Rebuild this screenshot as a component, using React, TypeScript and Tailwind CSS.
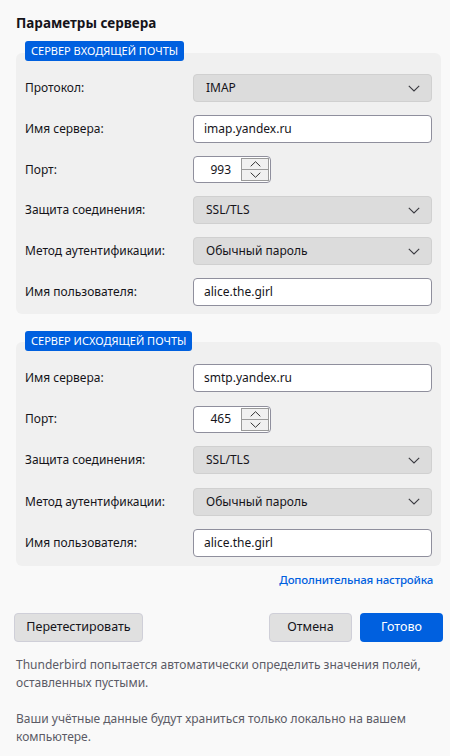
import React from "react";

const font = { fontFamily: '"Noto Sans", "Open Sans", sans-serif' };

function Chevron() {
  return (
    <svg width="12" height="7" viewBox="0 0 12 7" fill="none" className="shrink-0">
      <path d="M0.8 0.8 L6 6 L11.2 0.8" stroke="#3a3a40" strokeWidth="1.1" />
    </svg>
  );
}

function Select({ value }: { value: string }) {
  return (
    <div className="h-[28px] flex items-center justify-between rounded-[4px] bg-[#dcdcdc] border border-[#d0d0d0] pl-[12px] pr-[11px] text-[12px] text-[#15141a]">
      <span>{value}</span>
      <Chevron />
    </div>
  );
}

function Input({ value }: { value: string }) {
  return (
    <div className="h-[28px] flex items-center rounded-[4px] bg-white border border-[#8f8f9d] pl-[10px] text-[12px] text-[#15141a]">
      {value}
    </div>
  );
}

function Port({ value }: { value: string }) {
  return (
    <div className="h-[27px] w-[78px] flex items-stretch rounded-[4px] bg-white border border-[#8f8f9d] text-[12px] text-[#15141a]">
      <div className="flex-1 flex items-center justify-end pr-[9px]">{value}</div>
      <div className="w-[28px] m-[1px] flex flex-col border border-[#9a9a9a] bg-[#f0f0f0]">
        <div className="flex-1 flex items-center justify-center border-b border-[#9a9a9a]">
          <svg width="11" height="6" viewBox="0 0 11 6" fill="none">
            <path d="M0.7 5.3 L5.5 0.7 L10.3 5.3" stroke="#333" strokeWidth="1" />
          </svg>
        </div>
        <div className="flex-1 flex items-center justify-center">
          <svg width="11" height="6" viewBox="0 0 11 6" fill="none">
            <path d="M0.7 0.7 L5.5 5.3 L10.3 0.7" stroke="#333" strokeWidth="1" />
          </svg>
        </div>
      </div>
    </div>
  );
}

function Label({ children }: { children: React.ReactNode }) {
  return <div className="text-[12px] text-[#15141a]">{children}</div>;
}

function Badge({ children }: { children: React.ReactNode }) {
  return (
    <div className="relative z-10 ml-[9px] self-start h-[20px] flex items-center rounded-[3px] bg-[#0060df] px-[6px] text-[11px] text-white">
      {children}
    </div>
  );
}

export default function App() {
  return (
    <div style={font} className="w-[450px] h-[756px] bg-[#f9f9f9] pl-4 pr-[9px] pt-[13px] overflow-hidden">
      <div className="text-[13.5px] font-bold text-[#15141a] leading-[20px]">Параметры сервера</div>

      <div className="mt-[8px] flex flex-col">
        <Badge>СЕРВЕР ВХОДЯЩЕЙ ПОЧТЫ</Badge>
        <div className="-mt-[8px] rounded-[6px] bg-[#f0f0f0] pt-[21px] pb-[8px] pl-[9px] pr-[9px] grid grid-cols-[168px_1fr] items-center gap-y-[13px]">
          <Label>Протокол:</Label>
          <Select value="IMAP" />
          <Label>Имя сервера:</Label>
          <Input value="imap.yandex.ru" />
          <Label>Порт:</Label>
          <Port value="993" />
          <Label>Защита соединения:</Label>
          <Select value="SSL/TLS" />
          <Label>Метод аутентификации:</Label>
          <Select value="Обычный пароль" />
          <Label>Имя пользователя:</Label>
          <Input value="alice.the.girl" />
        </div>
      </div>

      <div className="mt-[17px] flex flex-col">
        <Badge>СЕРВЕР ИСХОДЯЩЕЙ ПОЧТЫ</Badge>
        <div className="-mt-[9px] rounded-[6px] bg-[#f0f0f0] pt-[22px] pb-[9px] pl-[9px] pr-[9px] grid grid-cols-[168px_1fr] items-center gap-y-[13.5px]">
          <Label>Имя сервера:</Label>
          <Input value="smtp.yandex.ru" />
          <Label>Порт:</Label>
          <Port value="465" />
          <Label>Защита соединения:</Label>
          <Select value="SSL/TLS" />
          <Label>Метод аутентификации:</Label>
          <Select value="Обычный пароль" />
          <Label>Имя пользователя:</Label>
          <Input value="alice.the.girl" />
        </div>
      </div>

      <div className="mt-[5px] flex justify-end pr-[8px]">
        <span className="text-[11.5px] font-medium tracking-[-0.2px] text-[#0060df] leading-[18px]">Дополнительная настройка</span>
      </div>

      <div className="mt-[24px] -ml-[2px] -mr-[2px] flex items-center">
        <div className="h-[29px] w-[129px] flex items-center justify-center rounded-[4px] bg-[#e0e0e0] border border-[#cfcfd8] text-[12.5px] text-[#15141a]">
          Перетестировать
        </div>
        <div className="flex-1" />
        <div className="h-[29px] w-[83px] flex items-center justify-center rounded-[4px] bg-[#e0e0e0] border border-[#cfcfd8] text-[12.5px] text-[#15141a]">
          Отмена
        </div>
        <div className="ml-[8px] h-[29px] w-[83px] flex items-center justify-center rounded-[4px] bg-[#0060df] text-[12.5px] text-white">
          Готово
        </div>
      </div>

      <div className="mt-[14px] text-[12px] leading-[18px] text-[#5b5b66]">
        Thunderbird попытается автоматически определить значения полей, оставленных пустыми.
      </div>
      <div className="mt-[18px] text-[12px] leading-[18px] text-[#5b5b66]">
        Ваши учётные данные будут храниться только локально на вашем компьютере.
      </div>
    </div>
  );
}
